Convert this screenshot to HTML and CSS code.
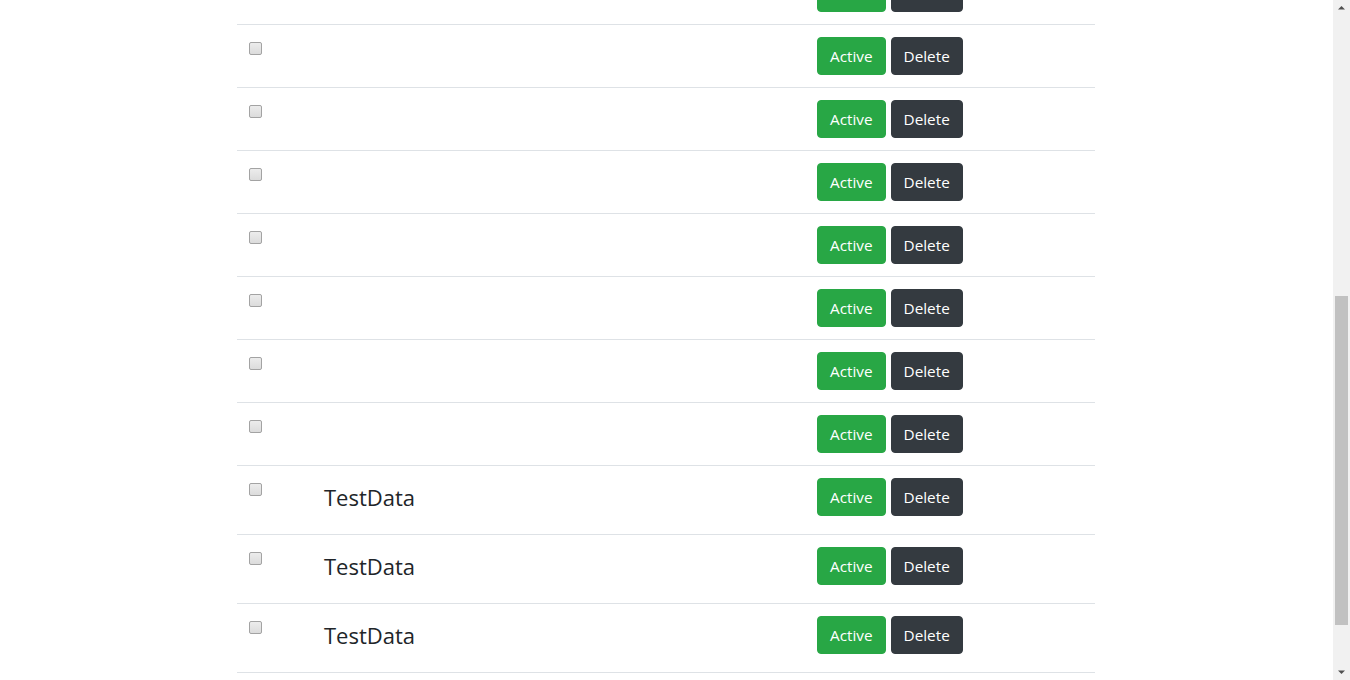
FILE: index.html
```html
<!DOCTYPE html>
<html lang="en">
<head>
<meta charset="utf-8">
<title>List</title>
<link rel="stylesheet" href="styles.css">
</head>
<body>
<div class="page">
  <table class="list">
    <colgroup>
      <col class="c-check">
      <col class="c-text">
      <col class="c-actions">
    </colgroup>
    <tbody>
      <tr><td><input type="checkbox" class="check"></td><td></td><td><div class="actions"><button class="btn btn-green">Active</button><button class="btn btn-dark">Delete</button></div></td></tr>
      <tr><td><input type="checkbox" class="check"></td><td></td><td><div class="actions"><button class="btn btn-green">Active</button><button class="btn btn-dark">Delete</button></div></td></tr>
      <tr><td><input type="checkbox" class="check"></td><td></td><td><div class="actions"><button class="btn btn-green">Active</button><button class="btn btn-dark">Delete</button></div></td></tr>
      <tr><td><input type="checkbox" class="check"></td><td></td><td><div class="actions"><button class="btn btn-green">Active</button><button class="btn btn-dark">Delete</button></div></td></tr>
      <tr><td><input type="checkbox" class="check"></td><td></td><td><div class="actions"><button class="btn btn-green">Active</button><button class="btn btn-dark">Delete</button></div></td></tr>
      <tr><td><input type="checkbox" class="check"></td><td></td><td><div class="actions"><button class="btn btn-green">Active</button><button class="btn btn-dark">Delete</button></div></td></tr>
      <tr><td><input type="checkbox" class="check"></td><td></td><td><div class="actions"><button class="btn btn-green">Active</button><button class="btn btn-dark">Delete</button></div></td></tr>
      <tr><td><input type="checkbox" class="check"></td><td></td><td><div class="actions"><button class="btn btn-green">Active</button><button class="btn btn-dark">Delete</button></div></td></tr>
      <tr><td><input type="checkbox" class="check"></td><td></td><td><div class="actions"><button class="btn btn-green">Active</button><button class="btn btn-dark">Delete</button></div></td></tr>
      <tr><td><input type="checkbox" class="check"></td><td></td><td><div class="actions"><button class="btn btn-green">Active</button><button class="btn btn-dark">Delete</button></div></td></tr>
      <tr><td><input type="checkbox" class="check"></td><td></td><td><div class="actions"><button class="btn btn-green">Active</button><button class="btn btn-dark">Delete</button></div></td></tr>
      <tr><td><input type="checkbox" class="check"></td><td></td><td><div class="actions"><button class="btn btn-green">Active</button><button class="btn btn-dark">Delete</button></div></td></tr>
      <tr><td><input type="checkbox" class="check"></td><td></td><td><div class="actions"><button class="btn btn-green">Active</button><button class="btn btn-dark">Delete</button></div></td></tr>
      <tr><td><input type="checkbox" class="check"></td><td></td><td><div class="actions"><button class="btn btn-green">Active</button><button class="btn btn-dark">Delete</button></div></td></tr>
      <tr><td><input type="checkbox" class="check"></td><td></td><td><div class="actions"><button class="btn btn-green">Active</button><button class="btn btn-dark">Delete</button></div></td></tr>
      <tr><td><input type="checkbox" class="check"></td><td></td><td><div class="actions"><button class="btn btn-green">Active</button><button class="btn btn-dark">Delete</button></div></td></tr>
      <tr><td><input type="checkbox" class="check"></td><td><h4 class="item">TestData</h4></td><td><div class="actions"><button class="btn btn-green">Active</button><button class="btn btn-dark">Delete</button></div></td></tr>
      <tr><td><input type="checkbox" class="check"></td><td><h4 class="item">TestData</h4></td><td><div class="actions"><button class="btn btn-green">Active</button><button class="btn btn-dark">Delete</button></div></td></tr>
      <tr><td><input type="checkbox" class="check"></td><td><h4 class="item">TestData</h4></td><td><div class="actions"><button class="btn btn-green">Active</button><button class="btn btn-dark">Delete</button></div></td></tr>
      <tr><td><input type="checkbox" class="check"></td><td><h4 class="item">TestData</h4></td><td><div class="actions"><button class="btn btn-green">Active</button><button class="btn btn-dark">Delete</button></div></td></tr>
    </tbody>
  </table>
</div>
<div class="sbar" aria-hidden="true">
  <div class="sbar-btn">
    <svg width="17" height="17" viewBox="0 0 17 17"><path d="M5 9.5 L8.5 6 L12 9.5 Z" fill="#505050"/></svg>
  </div>
  <div class="sbar-track"><div class="sbar-thumb"></div></div>
  <div class="sbar-btn">
    <svg width="17" height="17" viewBox="0 0 17 17"><path d="M5 7.5 L8.5 11 L12 7.5 Z" fill="#505050"/></svg>
  </div>
</div>
<script src="script.js"></script>
</body>
</html>
```

FILE: styles.css
```css
html, body {
  margin: 0;
  padding: 0;
  background: #fff;
}
body {
  width: 1333px;
  font-family: "Open Sans", "Noto Sans", "Liberation Sans", sans-serif;
  font-size: 15px;
  line-height: 24px;
  color: #212529;
}
.page {
  padding: 34px 1px 17px 0;
}
.list {
  width: 858px;
  margin: 0 auto;
  border-collapse: collapse;
  table-layout: fixed;
}
.c-check { width: 75px; }
.c-text { width: 493px; }
.c-actions { width: 290px; }
.list td {
  padding: 12px;
  vertical-align: top;
  border-top: 1px solid #dee2e6;
}
.check {
  -webkit-appearance: none;
  appearance: none;
  display: block;
  width: 13px;
  height: 13px;
  margin: 5px 0 0 0;
  box-sizing: border-box;
  border: 1px solid #a3a3a3;
  border-radius: 2px;
  background: linear-gradient(#ececec, #dcdcdc);
}
.item {
  margin: 4px 0 10px;
  font-size: 22px;
  font-weight: 400;
  line-height: 30px;
  color: #212529;
}
.actions {
  display: flex;
  gap: 5px;
}
.btn {
  font-family: inherit;
  font-size: 15.3px;
  line-height: 24px;
  padding: 6px 12px;
  border: 1px solid transparent;
  border-radius: 4px;
  color: #fff;
  cursor: pointer;
}
.btn-green {
  background: #28a745;
  border-color: #28a745;
}
.btn-dark {
  background: #343a40;
  border-color: #343a40;
}

/* window scrollbar (fixed over the viewport edge) */
.sbar {
  position: fixed;
  top: 0;
  right: 0;
  width: 17px;
  height: 100vh;
  background: #f1f1f1;
  display: flex;
  flex-direction: column;
}
.sbar-btn {
  height: 17px;
  flex: none;
}
.sbar-btn svg {
  display: block;
}
.sbar-track {
  flex: 1;
  padding-top: 279px;
}
.sbar-thumb {
  width: 13px;
  height: 329px;
  margin-left: 2px;
  background: #c1c1c1;
}
```

FILE: script.js
```js
window.scrollTo(0, 577);
window.addEventListener('load', function () { window.scrollTo(0, 577); });
```
